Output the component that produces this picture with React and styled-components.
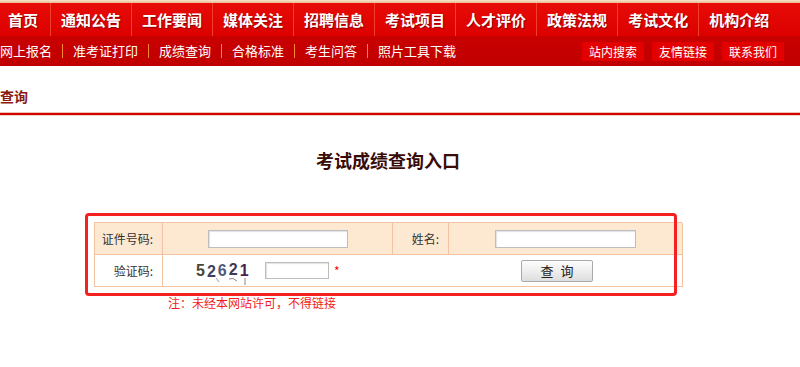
import styled, { createGlobalStyle } from "styled-components";

const Global = createGlobalStyle`
  html, body {
    margin: 0;
    padding: 0;
    background: #fff;
    overflow: hidden;
  }
  body {
    font-family: "Noto Sans CJK SC", "Noto Sans", sans-serif;
  }
`;

const Header = styled.header`
  width: 100%;
`;

const TopStrip = styled.div`
  height: 3px;
  background: linear-gradient(#f8e6cf, #e9b98c);
`;

const MainNav = styled.ul`
  display: flex;
  margin: 0;
  padding: 0;
  list-style: none;
  height: 33px;
  background: linear-gradient(#e70c06, #dc0000);
`;

const MainItem = styled.li`
  display: flex;
  align-items: center;
  padding: 0 10px;
  font-size: 15px;
  font-weight: bold;
  color: #fff;
  text-shadow: 1px 1px 1px #8c0000;
  & + & {
    border-left: 1px solid #ef3f28;
  }
  &:first-child {
    padding: 0 12px 0 8px;
  }
`;

const SubNav = styled.div`
  display: flex;
  justify-content: space-between;
  align-items: center;
  height: 30px;
  background: linear-gradient(#c90000, #c00000);
`;

const SubList = styled.ul`
  display: flex;
  align-items: center;
  margin: 0;
  padding: 0;
  list-style: none;
`;

const SubItem = styled.li`
  padding: 0 10px;
  font-size: 13px;
  line-height: 14px;
  color: #fff;
  & + & {
    border-left: 1px solid #f88a2e;
  }
  &:first-child {
    padding-left: 0;
  }
`;

const Tools = styled.div`
  display: flex;
  gap: 8px;
  margin-right: 16px;
`;

const ToolButton = styled.span`
  display: block;
  height: 19px;
  line-height: 19px;
  padding: 0 7px;
  font-size: 12px;
  color: #fff;
  background: #e30000;
`;

const Crumb = styled.div`
  box-sizing: border-box;
  height: 47px;
  padding-top: 20px;
  font-size: 14px;
  line-height: 20px;
  font-weight: bold;
  color: #8b1b10;
`;

const Divider = styled.div`
  height: 2px;
  background: #cf0000;
  box-shadow: 0 -1px 0 #f4bfb4, 0 1px 0 #f8d6cd;
`;

const Content = styled.main`
  width: 588px;
  margin-left: 94px;
`;

const Title = styled.h2`
  margin: 33px 0 0;
  text-align: center;
  font-size: 18px;
  line-height: 24px;
  font-weight: bold;
  color: #3a0c08;
`;

const FormWrap = styled.div`
  position: relative;
  margin-top: 50px;
`;

const Highlight = styled.div`
  position: absolute;
  left: -9px;
  top: -9px;
  width: 592px;
  height: 83px;
  box-sizing: border-box;
  border: 3px solid #f52020;
  border-radius: 4px;
  pointer-events: none;
`;

const Grid = styled.div`
  display: grid;
  grid-template-columns: 68px 230px 56px 234px;
  grid-auto-rows: 32px;
  box-sizing: border-box;
  border-top: 1px solid #f1c3a2;
  border-left: 1px solid #f1c3a2;
`;

const Cell = styled.div`
  display: flex;
  align-items: center;
  justify-content: ${(p) => (p.$label ? "flex-end" : "center")};
  padding-right: ${(p) => (p.$label ? "9px" : "0")};
  grid-column: ${(p) => p.$span || "auto"};
  background: ${(p) => (p.$shaded ? "#fde8d1" : "#fff")};
  border-right: 1px solid #f1c3a2;
  border-bottom: 1px solid #f1c3a2;
  font-size: 12px;
  color: #333;
`;

const TextInput = styled.input`
  box-sizing: border-box;
  width: ${(p) => p.$w}px;
  height: ${(p) => p.$h}px;
  margin: 0 0 0 ${(p) => p.$ml || 0}px;
  padding: 0 3px;
  border: 1px solid #bdbdbd;
  box-shadow: inset 1px 1px 1px #e2e2e2;
  background: #fff;
  outline: none;
`;

const CodeRow = styled(Cell)`
  justify-content: flex-start;
  padding-left: 33px;
`;

const Captcha = styled.span`
  position: relative;
  display: inline-flex;
  width: 57px;
  font-family: "Liberation Sans", Arial, sans-serif;
  font-size: 16px;
  font-weight: bold;
  letter-spacing: 2px;
  margin-top: 1px;
`;

const Digit = styled.span`
  color: ${(p) => p.$c};
  transform: translateY(${(p) => p.$dy || 0}px);
`;

const Noise = styled.svg`
  position: absolute;
  left: 0;
  top: 15px;
`;

const Star = styled.span`
  margin-left: 5px;
  color: #f00;
  font-size: 12px;
`;

const QueryButton = styled.button`
  box-sizing: border-box;
  width: 72px;
  height: 22px;
  margin-left: auto;
  margin-right: 89px;
  padding: 0;
  border: 1px solid #a9a9a9;
  border-radius: 2px;
  background: linear-gradient(#fdfdfd, #dedede);
  font-family: "Noto Sans CJK SC", sans-serif;
  font-size: 13px;
  word-spacing: 4px;
  color: #222;
`;

const Note = styled.p`
  margin: 8px 0 0 74px;
  font-size: 12px;
  line-height: 16px;
  color: #f21b1b;
`;

const mainLinks = ["首页", "通知公告", "工作要闻", "媒体关注", "招聘信息", "考试项目", "人才评价", "政策法规", "考试文化", "机构介绍"];
const subLinks = ["网上报名", "准考证打印", "成绩查询", "合格标准", "考生问答", "照片工具下载"];
const tools = ["站内搜索", "友情链接", "联系我们"];
const digits = [
  { d: "5", c: "#4a4636" },
  { d: "2", c: "#3e3f62", dy: 1 },
  { d: "6", c: "#4f5b78" },
  { d: "2", c: "#3f3a55", dy: -1 },
  { d: "1", c: "#4b1f52" },
];

export default function App() {
  return (
    <>
      <Global />
      <Header>
        <TopStrip />
        <MainNav>
          {mainLinks.map((t) => (
            <MainItem key={t}>{t}</MainItem>
          ))}
        </MainNav>
        <SubNav>
          <SubList>
            {subLinks.map((t) => (
              <SubItem key={t}>{t}</SubItem>
            ))}
          </SubList>
          <Tools>
            {tools.map((t) => (
              <ToolButton key={t}>{t}</ToolButton>
            ))}
          </Tools>
        </SubNav>
      </Header>
      <Crumb>查询</Crumb>
      <Divider />
      <Content>
        <Title>考试成绩查询入口</Title>
        <FormWrap>
          <Grid>
            <Cell $label $shaded>证件号码:</Cell>
            <Cell $shaded>
              <TextInput $w={140} $h={18} />
            </Cell>
            <Cell $label $shaded>姓名:</Cell>
            <Cell $shaded>
              <TextInput $w={141} $h={18} />
            </Cell>
            <Cell $label>验证码:</Cell>
            <CodeRow $span="2 / span 3">
              <Captcha>
                {digits.map((x, i) => (
                  <Digit key={i} $c={x.c} $dy={x.dy}>{x.d}</Digit>
                ))}
                <Noise width="57" height="10" viewBox="0 0 57 10">
                  <path d="M20 1 L23 5" stroke="#9a9a9a" strokeWidth="1" fill="none" />
                  <path d="M33 2 Q37 0 41 4" stroke="#8a8a9a" strokeWidth="1" fill="none" />
                  <path d="M49 1 L49 8" stroke="#888" strokeWidth="1" fill="none" />
                </Noise>
              </Captcha>
              <TextInput $w={64} $h={17} $ml={12} />
              <Star>*</Star>
              <QueryButton type="button">查 询</QueryButton>
            </CodeRow>
          </Grid>
          <Highlight />
        </FormWrap>
        <Note>注：未经本网站许可，不得链接</Note>
      </Content>
    </>
  );
}
